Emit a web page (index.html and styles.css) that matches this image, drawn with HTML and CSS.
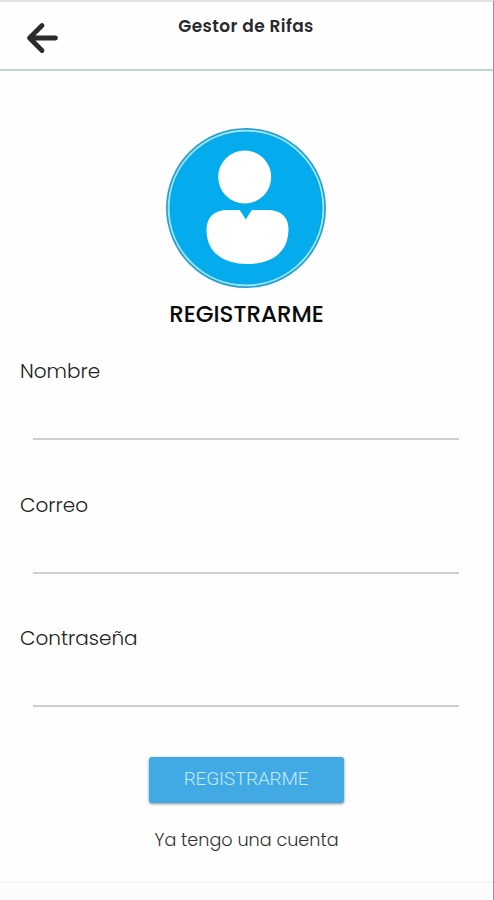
FILE: index.html
```html
<!DOCTYPE html>
<html lang="es">
<head>
<meta charset="utf-8">
<meta name="viewport" content="width=device-width, initial-scale=1">
<title>Gestor de Rifas</title>
<link rel="stylesheet" href="styles.css">
</head>
<body>
<div class="screen">
  <header class="topbar">
    <a class="back" href="#" aria-label="Volver">
      <svg width="32" height="32" viewBox="0 0 32 32" fill="none" stroke="#2b2b2d" stroke-width="4.8" stroke-linecap="round" stroke-linejoin="round"><path d="M29.500 16H4.500M16 3.500L3.500 16L16 28.500"/></svg>
    </a>
    <div class="title">Gestor de Rifas</div>
  </header>
  <main class="content">
    <svg class="avatar" width="160" height="160" viewBox="0 0 160 160">
      <circle cx="80" cy="80" r="80" fill="#2d9fce"/>
      <circle cx="80" cy="80" r="77.300" fill="#04acee" stroke="#8ee9ff" stroke-width="2"/>
      <circle cx="80" cy="80" r="75.800" fill="none" stroke="#249cc9" stroke-width="0.700"/>
      <circle cx="78.700" cy="49" r="26.500" fill="#fff"/>
      <path fill="#fff" d="M73.500 82L75 84L79.800 91.500L84.500 84L86 82H101C115 82 122.500 89 122.500 101C122.500 125 105 136 81.500 136C58 136 40.500 125 40.500 102C40.500 89 48 82 62 82Z"/>
    </svg>
    <h1 class="heading">REGISTRARME</h1>
    <form class="form">
      <label class="field"><span class="label">Nombre</span><input class="input" type="text"></label>
      <label class="field"><span class="label">Correo</span><input class="input" type="email"></label>
      <label class="field"><span class="label">Contraseña</span><input class="input" type="password"></label>
      <button class="submit" type="button">REGISTRARME</button>
    </form>
    <a class="login" href="#">Ya tengo una cuenta</a>
  </main>
  <footer class="bottom"></footer>
</div>
</body>
</html>
```
FILE: styles.css
```css
* { box-sizing: border-box; }
body {
  margin: 0;
  background: #fefefe;
  font-family: Poppins, Inter, "Open Sans", sans-serif;
  color: #222;
}
.screen {
  height: 900px;
  display: flex;
  flex-direction: column;
  border-top: 2px solid #e2e2e2;
  border-right: 1px solid #929595;
  overflow: hidden;
}
.topbar {
  height: 69px;
  flex: none;
  display: grid;
  grid-template-columns: 58px 1fr 60px;
  border-bottom: 2px solid #bfd3d3;
}
.back {
  display: flex;
  align-items: center;
  padding: 4px 0 0 26px;
}
.back svg { flex: none; }
.title {
  padding: 12px 0 0 1px;
  text-align: center;
  font-size: 17px;
  line-height: 24px;
  font-weight: 600;
  letter-spacing: 0.4px;
  color: #29292b;
}
.content {
  flex: 1;
  display: flex;
  flex-direction: column;
  align-items: center;
  padding-top: 57px;
}
.avatar { display: block; flex: none; margin-right: 1px; }
.heading {
  margin: 10px 0 0;
  font-size: 23px;
  line-height: 32px;
  font-weight: 500;
  color: #0b0b0b;
}
.form {
  width: 100%;
  display: flex;
  flex-direction: column;
  align-items: center;
  padding: 25px 34px 0 20px;
}
.field {
  width: 100%;
  height: 133.500px;
  display: flex;
  flex-direction: column;
}
.label {
  font-size: 20px;
  line-height: 32px;
  font-weight: 300;
}
.input {
  height: 53px;
  margin-left: 13px;
  padding: 8px 4px;
  border: 0;
  border-bottom: 2px solid #cfcfcf;
  background: transparent;
  font: inherit;
  outline: 0;
}
.submit {
  width: 195px;
  height: 46px;
  margin: 1px 0 0 14px;
  padding: 0 1px 1px 0;
  border: 0;
  border-radius: 3px;
  background: #41aae5;
  color: #c5eafc;
  font-family: Roboto, sans-serif;
  font-size: 19px;
  line-height: 44px;
  font-weight: 300;
  letter-spacing: -0.2px;
  box-shadow: 0 1px 3px rgba(0, 0, 0, 0.45);
}
.login {
  margin-top: 22px;
  font-size: 17.6px;
  line-height: 30px;
  font-weight: 300;
  color: #333;
  text-decoration: none;
}
.bottom {
  height: 19px;
  flex: none;
  border-top: 2px solid #f5f6f6;
  background: #fcfcfc;
}
```
